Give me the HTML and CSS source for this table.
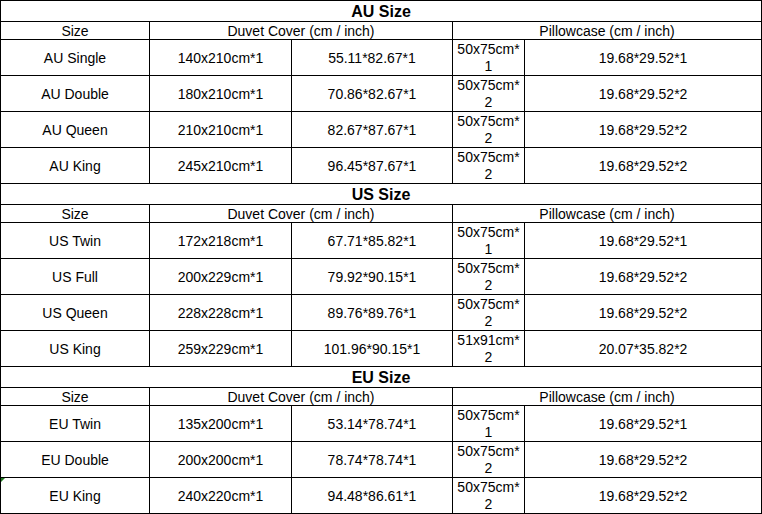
FILE: index.html
```html
<!DOCTYPE html>
<html lang="en">
<head>
<meta charset="utf-8">
<title>Bedding Size Chart</title>
<link rel="stylesheet" href="styles.css">
</head>
<body>
<table class="size-table">
  <colgroup>
    <col class="c-size">
    <col class="c-dcm">
    <col class="c-din">
    <col class="c-pcm">
    <col class="c-pin">
  </colgroup>
  <tbody>
    <tr class="title"><th colspan="5">AU Size</th></tr>
    <tr class="head"><td>Size</td><td colspan="2">Duvet Cover (cm / inch)</td><td colspan="2">Pillowcase (cm / inch)</td></tr>
    <tr class="row"><td>AU Single</td><td>140x210cm*1</td><td>55.11*82.67*1</td><td class="wrap">50x75cm*<br>1</td><td>19.68*29.52*1</td></tr>
    <tr class="row"><td>AU Double</td><td>180x210cm*1</td><td>70.86*82.67*1</td><td class="wrap">50x75cm*<br>2</td><td>19.68*29.52*2</td></tr>
    <tr class="row"><td>AU Queen</td><td>210x210cm*1</td><td>82.67*87.67*1</td><td class="wrap">50x75cm*<br>2</td><td>19.68*29.52*2</td></tr>
    <tr class="row"><td>AU King</td><td>245x210cm*1</td><td>96.45*87.67*1</td><td class="wrap">50x75cm*<br>2</td><td>19.68*29.52*2</td></tr>

    <tr class="title"><th colspan="5">US Size</th></tr>
    <tr class="head"><td>Size</td><td colspan="2">Duvet Cover (cm / inch)</td><td colspan="2">Pillowcase (cm / inch)</td></tr>
    <tr class="row"><td>US Twin</td><td>172x218cm*1</td><td>67.71*85.82*1</td><td class="wrap">50x75cm*<br>1</td><td>19.68*29.52*1</td></tr>
    <tr class="row"><td>US Full</td><td>200x229cm*1</td><td>79.92*90.15*1</td><td class="wrap">50x75cm*<br>2</td><td>19.68*29.52*2</td></tr>
    <tr class="row"><td>US Queen</td><td>228x228cm*1</td><td>89.76*89.76*1</td><td class="wrap">50x75cm*<br>2</td><td>19.68*29.52*2</td></tr>
    <tr class="row"><td>US King</td><td>259x229cm*1</td><td>101.96*90.15*1</td><td class="wrap">51x91cm*<br>2</td><td>20.07*35.82*2</td></tr>

    <tr class="title"><th colspan="5">EU Size</th></tr>
    <tr class="head"><td>Size</td><td colspan="2">Duvet Cover (cm / inch)</td><td colspan="2">Pillowcase (cm / inch)</td></tr>
    <tr class="row"><td>EU Twin</td><td>135x200cm*1</td><td>53.14*78.74*1</td><td class="wrap">50x75cm*<br>1</td><td>19.68*29.52*1</td></tr>
    <tr class="row"><td>EU Double</td><td>200x200cm*1</td><td>78.74*78.74*1</td><td class="wrap">50x75cm*<br>2</td><td>19.68*29.52*2</td></tr>
    <tr class="row"><td class="flagged">EU King</td><td>240x220cm*1</td><td>94.48*86.61*1</td><td class="wrap">50x75cm*<br>2</td><td>19.68*29.52*2</td></tr>
  </tbody>
</table>
</body>
</html>
```

FILE: styles.css
```css
html, body {
  margin: 0;
  padding: 0;
  background: #ffffff;
}

.size-table {
  border-collapse: collapse;
  table-layout: fixed;
  width: 761px;
  font-family: "Liberation Sans", Arial, sans-serif;
  font-size: 14px;
  color: #000000;
}

.c-size { width: 149px; }
.c-dcm  { width: 142px; }
.c-din  { width: 161px; }
.c-pcm  { width: 72px; }
.c-pin  { width: 237px; }

.size-table th,
.size-table td {
  border: 1px solid #000000;
  padding: 1px 2px 0;
  text-align: center;
  vertical-align: middle;
  line-height: 17px;
  white-space: nowrap;
  overflow: hidden;
}

.title th {
  height: 19px;
  font-size: 16px;
  font-weight: bold;
  line-height: 18px;
}

.head td {
  height: 15px;
  padding-top: 2px;
  line-height: 15px;
}

.row td {
  height: 34px;
}

.flagged {
  position: relative;
}

.flagged::before {
  content: "";
  position: absolute;
  left: 0;
  top: 0;
  border-top: 4px solid #1f7a1f;
  border-right: 4px solid transparent;
}
```
